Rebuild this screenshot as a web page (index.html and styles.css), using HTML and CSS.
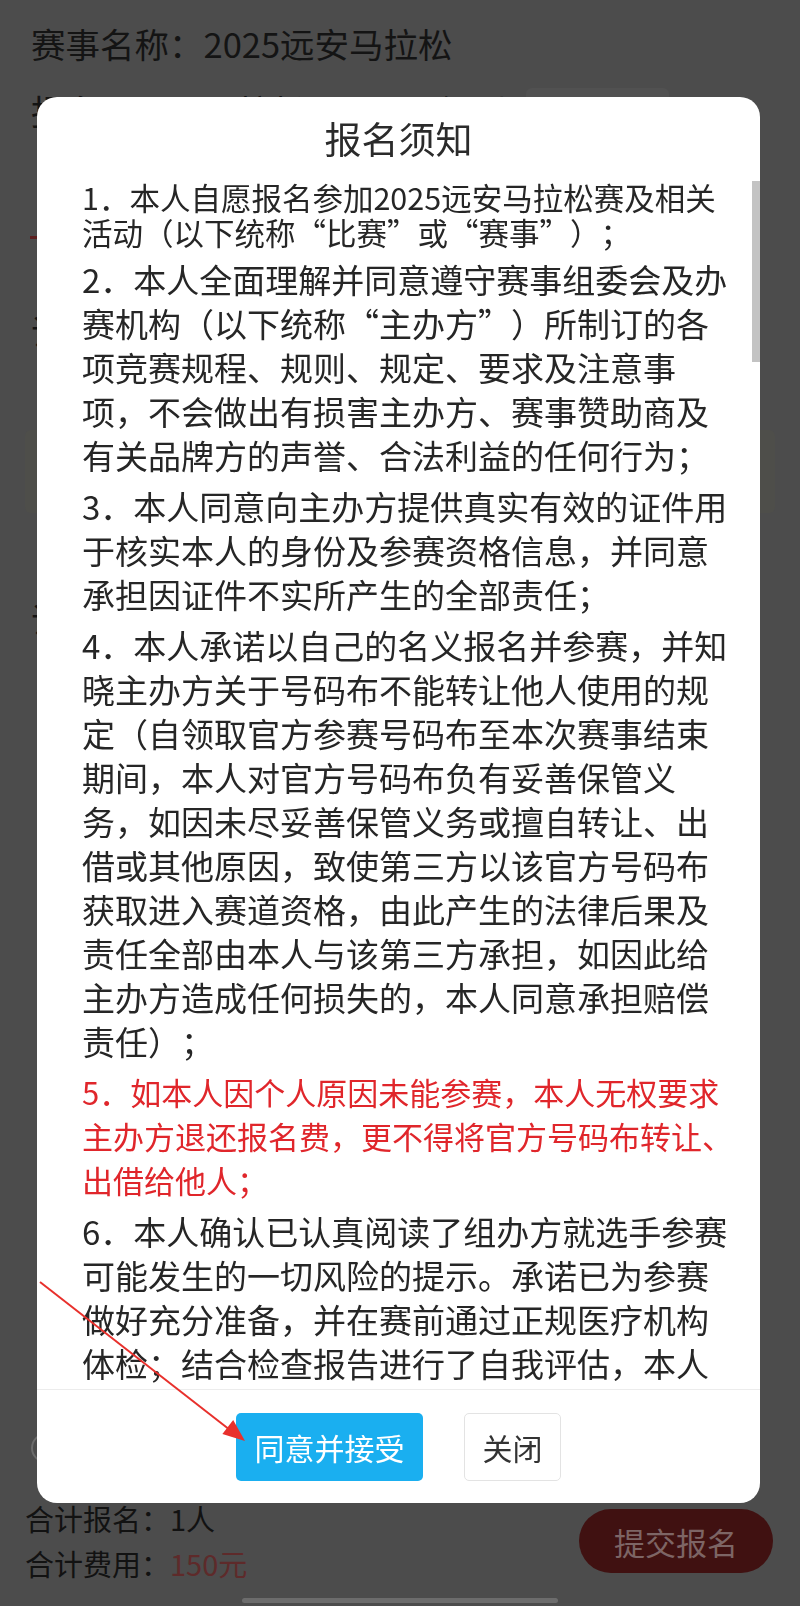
FILE: index.html
```html
<!DOCTYPE html>
<html lang="zh-CN">
<head>
<meta charset="utf-8">
<title>报名须知</title>
<link rel="stylesheet" href="styles.css">
</head>
<body>
<div class="page">
  <div class="field event-name">赛事名称：2025远安马拉松</div>
  <div class="field event-item">报名项目：马拉松<span class="gap"></span>组别<span class="tag"></span></div>
  <div class="red-rule"></div>
  <div class="field row-a">证件类型：身份证</div>
  <div class="faint-box"></div>
  <div class="field row-b">证件号码：</div>
  <div class="field agree-row"><span class="radio"></span>我已阅读并同意报名须知</div>
  <div class="bottom-bar">
    <div class="totals">
      <div>合计报名：1人</div>
      <div>合计费用：<span class="fee">150元</span></div>
    </div>
    <button class="submit">提交报名</button>
  </div>
  <div class="home-indicator"></div>
</div>

<div class="modal" role="dialog">
  <h2 class="modal-title">报名须知</h2>
  <div class="modal-body">
    <p class="lead">1．本人自愿报名参加2025远安马拉松赛及相关活动（以下统称“比赛”或“赛事”）；</p>
    <p>2．本人全面理解并同意遵守赛事组委会及办赛机构（以下统称“主办方”）所制订的各项竞赛规程、规则、规定、要求及注意事项，不会做出有损害主办方、赛事赞助商及有关品牌方的声誉、合法利益的任何行为；</p>
    <p>3．本人同意向主办方提供真实有效的证件用于核实本人的身份及参赛资格信息，并同意承担因证件不实所产生的全部责任；</p>
    <p>4．本人承诺以自己的名义报名并参赛，并知晓主办方关于号码布不能转让他人使用的规定（自领取官方参赛号码布至本次赛事结束期间，本人对官方号码布负有妥善保管义务，如因未尽妥善保管义务或擅自转让、出借或其他原因，致使第三方以该官方号码布获取进入赛道资格，由此产生的法律后果及责任全部由本人与该第三方承担，如因此给主办方造成任何损失的，本人同意承担赔偿责任）；</p>
    <p class="warn">5．如本人因个人原因未能参赛，本人无权要求主办方退还报名费，更不得将官方号码布转让、出借给他人；</p>
    <p>6．本人确认已认真阅读了组办方就选手参赛可能发生的一切风险的提示。承诺已为参赛做好充分准备，并在赛前通过正规医疗机构体检；结合检查报告进行了自我评估，本人身体状况适合参加本次比赛；</p>
  </div>
  <div class="scroll-thumb"></div>
  <div class="modal-footer">
    <button class="btn btn-primary">同意并接受</button>
    <button class="btn btn-plain">关闭</button>
  </div>
</div>

<svg class="annotation" width="800" height="1606" viewBox="0 0 800 1606">
  <line x1="40" y1="1282" x2="230" y2="1430" stroke="#e8302c" stroke-width="2"/>
  <polygon points="245,1441 222.4,1433.9 233.2,1420" fill="#e8302c"/>
</svg>
</body>
</html>
```

FILE: styles.css
```css
* {
  box-sizing: border-box;
  margin: 0;
  padding: 0;
}

html,
body {
  width: 800px;
  height: 1606px;
}

body {
  background: #4c4c4c;
  font-family: "Noto Sans CJK SC", "Noto Sans", sans-serif;
  color: #141414;
  overflow: hidden;
  text-spacing-trim: space-all;
}

/* ---------- dimmed page underneath ---------- */
.page {
  height: 1606px;
  display: flex;
  flex-direction: column;
}

.field {
  font-size: 34.5px;
  line-height: 44px;
  padding-left: 31px;
  white-space: nowrap;
}

.event-name {
  margin-top: 21px;
}

.event-item {
  margin-top: 23px;
  display: flex;
  align-items: center;
}

.gap {
  width: 130px;
}

.tag {
  margin-left: 20px;
  width: 143px;
  height: 44px;
  background: #515151;
  border-radius: 6px;
}

.red-rule {
  margin: 104px 0 0 30px;
  width: 30px;
  height: 3px;
  background: #5c1f1f;
}

.row-a {
  margin-top: 69px;
}

.faint-box {
  margin: 78px 25px 0;
  height: 83px;
  background: #4e4e4a;
  border-radius: 6px;
}

.row-b {
  margin-top: 83px;
}

.agree-row {
  margin-top: 786px;
  display: flex;
  align-items: center;
  gap: 12px;
}

.radio {
  width: 30px;
  height: 30px;
  border: 2px solid #6c6c6c;
  border-radius: 50%;
}

.bottom-bar {
  margin-top: 26px;
  padding: 0 27px 0 25px;
  display: flex;
  justify-content: space-between;
  align-items: center;
}

.totals {
  font-size: 29px;
  line-height: 45px;
  color: #121212;
}

.fee {
  color: #5e2a2a;
}

.submit {
  width: 194px;
  height: 64px;
  border: none;
  border-radius: 32px;
  background: #401111;
  color: #7d6565;
  font: inherit;
  font-size: 31px;
}

.home-indicator {
  width: 316px;
  height: 5px;
  margin: 12px auto 0;
  background: #6c6c6c;
  border-radius: 3px;
}

/* ---------- modal ---------- */
.modal {
  position: fixed;
  left: 37px;
  top: 97px;
  width: 723px;
  height: 1406px;
  background: #fff;
  border-radius: 20px;
  display: flex;
  flex-direction: column;
  overflow: hidden;
}

.modal-title {
  font-size: 37px;
  line-height: 42px;
  font-weight: 400;
  text-align: center;
  color: #2b2b2b;
  padding: 20px 0 21px;
}

.modal-body {
  flex: 1;
  min-height: 0;
  overflow: hidden;
  padding: 0 23px 0 45px;
  color: #262626;
}

.modal-body p {
  font-size: 33px;
  line-height: 44px;
  margin-bottom: 7px;
}

.modal-body p.lead {
  font-size: 30.5px;
  line-height: 35px;
}

.modal-body p.warn {
  font-size: 31px;
  color: #e0262b;
}

.scroll-thumb {
  position: absolute;
  right: 0;
  top: 84px;
  width: 8px;
  height: 181px;
  background: #c3c3c3;
}

.modal-footer {
  border-top: 1px solid #ececec;
  padding: 23px 0 22px;
  display: flex;
  justify-content: center;
  gap: 41px;
}

.btn {
  font: inherit;
  font-size: 30px;
  height: 68px;
  border-radius: 5px;
}

.btn-primary {
  width: 187px;
  background: #1aaff0;
  color: #fff;
  border: none;
}

.btn-plain {
  width: 97px;
  background: #fff;
  color: #333;
  border: 1px solid #e3e3e3;
}

/* ---------- annotation arrow ---------- */
.annotation {
  position: fixed;
  left: 0;
  top: 0;
  pointer-events: none;
}
```
